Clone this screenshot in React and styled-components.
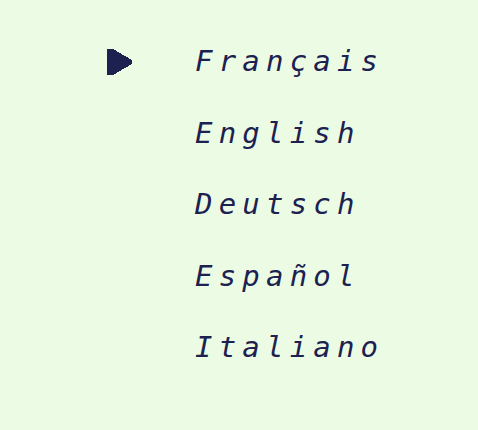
import React from 'react';
import styled, {createGlobalStyle} from "styled-components";

const languages = ["Français", "English", "Deutsch", "Español", "Italiano"];

const GlobalStyle = createGlobalStyle`
  html, body {
    margin: 0;
    padding: 0;
    background: #ecfce4;
  }
`;

const Screen = styled.div`
  width: 478px;
  height: 430px;
  background: #ecfce4;
  box-sizing: border-box;
  padding: 26px 0 0 107px;
`;

const List = styled.ul`
  list-style: none;
  margin: 0;
  padding: 0;
  display: flex;
  flex-direction: column;
`;

const Row = styled.li`
  display: flex;
  align-items: center;
  height: 71.5px;
`;

const Cursor = styled.div`
  width: 88px;
  display: flex;
  align-items: center;
  visibility: ${({ active }) => (active ? "visible" : "hidden")};
`;

const Label = styled.span`
  font-family: "DejaVu Sans Mono", monospace;
  font-style: italic;
  font-size: 29px;
  letter-spacing: 6.2px;
  color: #1c2150;
  line-height: 1;
`;

// Курсор выбора языка
const Arrow = () => (
  <svg width="26" height="26" viewBox="0 0 26 26" shapeRendering="crispEdges">
    <polygon points="0,0 6,0 25,11 25,15 6,26 0,26" fill="#1c2150" />
  </svg>
);

const App = () => {
  return (
    <Screen>
      <GlobalStyle />
      <List>
        {languages.map((lang, i) => (
          <Row key={lang}>
            <Cursor active={i === 0}>
              <Arrow />
            </Cursor>
            <Label>{lang}</Label>
          </Row>
        ))}
      </List>
    </Screen>
  );
};

export default App;
